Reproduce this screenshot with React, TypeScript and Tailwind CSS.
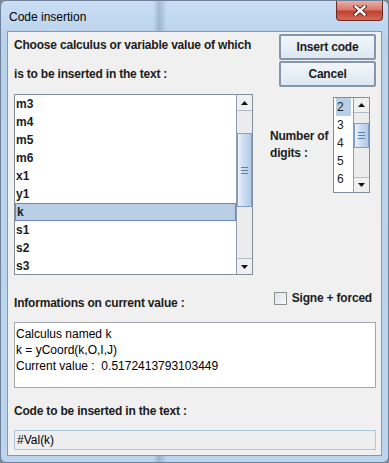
import React from 'react'

const items = ['m3', 'm4', 'm5', 'm6', 'x1', 'y1', 'k', 's1', 's2', 's3']
const digits = ['2', '3', '4', '5', '6']

function Arrow({ up }: { up?: boolean }) {
  return (
    <svg width="7" height="4" viewBox="0 0 7 4">
      <path d={up ? 'M0 4 L3.5 0 L7 4 Z' : 'M0 0 L3.5 4 L7 0 Z'} fill="#111" />
    </svg>
  )
}

// Vertical Java/Windows scroll bar; sizes are passed as full class names.
function ScrollBar({ btn, before, thumb }: { btn: string; before: string; thumb: string }) {
  return (
    <div className="flex w-[16px] shrink-0 flex-col border-l border-[#8f9cad] bg-[#ececec]">
      <div className={`${btn} flex items-center justify-center border-b border-[#b4bcc6] bg-[#f0f0f0]`}>
        <Arrow up />
      </div>
      <div className={before} />
      <div
        className={`${thumb} flex flex-col items-center justify-center gap-[2px] border border-[#7f9fc7] bg-[linear-gradient(to_right,#eaf2fb,#cadcf1_45%,#b3cae7)]`}
      >
        <div className="h-px w-[7px] bg-[#5a7fae]" />
        <div className="h-px w-[7px] bg-[#5a7fae]" />
        <div className="h-px w-[7px] bg-[#5a7fae]" />
      </div>
      <div className="flex-1" />
      <div className={`${btn} flex items-center justify-center border-t border-[#b4bcc6] bg-[#f0f0f0]`}>
        <Arrow />
      </div>
    </div>
  )
}

function Button({ label }: { label: string }) {
  return (
    <div className="flex h-[26px] w-[97px] items-center justify-center rounded-[2px] border-2 border-[#8496ab] bg-[linear-gradient(#f2f6fb,#dde7f2)] text-[12px] font-bold tracking-[-0.2px] text-[#1a1a1a]">
      {label}
    </div>
  )
}

export default function App() {
  return (
    <div className="h-[463px] w-[389px] bg-[#7d8894] font-['Liberation_Sans',Arial,sans-serif] text-[#1c1c1c]">
      {/* Aero window frame */}
      <div className="flex h-[463px] w-[389px] flex-col rounded-[6px] border border-[#6f8299] bg-[linear-gradient(to_right,transparent_152px,rgba(70,95,130,0.28)_158px,transparent_166px),linear-gradient(#c9def4,#b9d2ec_40px,#bcd4ed)]">
        <div className="flex h-[30px] shrink-0 items-start">
          <div className="pl-[8px] pt-[8px] text-[12px] leading-[16px] text-black">Code insertion</div>
          <div className="ml-auto mr-[5px] flex h-[20px] w-[47px] items-center justify-center rounded-b-[4px] border border-t-0 border-[#6b2b24] bg-[linear-gradient(#eab0a6,#d6786b_45%,#c4402f_55%,#d36a58)]">
            <svg width="14" height="11" viewBox="0 0 14 11">
              <path d="M2.5 1.5 L11.5 9.5 M11.5 1.5 L2.5 9.5" stroke="#4a1d17" strokeWidth="4.2" strokeLinecap="square" />
              <path d="M2.5 1.5 L11.5 9.5 M11.5 1.5 L2.5 9.5" stroke="#ffffff" strokeWidth="2.4" strokeLinecap="square" />
            </svg>
          </div>
        </div>

        {/* Content panel */}
        <div className="mx-[6px] flex h-[425px] flex-col border border-[#8799ad] bg-[#f0f0f0] pl-[6px] pr-[5px]">
          <div className="flex">
            <div className="flex w-[240px] flex-col">
              <div className="mt-[5px] whitespace-nowrap text-[12px] font-bold leading-[16px] tracking-[-0.2px]">
                Choose calculus or variable value of which
              </div>
              <div className="mt-[13px] whitespace-nowrap text-[12px] font-bold leading-[16px] tracking-[-0.2px]">
                is to be inserted in the text :
              </div>
              <div className="mt-[12px] flex h-[181px] border border-[#828d9b] bg-white">
                <div className="flex flex-1 flex-col overflow-hidden">
                  {items.map((it) => (
                    <div
                      key={it}
                      className={`flex h-[18px] shrink-0 items-center pl-px text-[12px] font-bold ${
                        it === 'k' ? 'border border-[#6a88bf] bg-[#b8cfe5] pl-0' : ''
                      }`}
                    >
                      {it}
                    </div>
                  ))}
                </div>
                <ScrollBar btn="h-[16px]" before="h-[22px]" thumb="h-[74px]" />
              </div>
            </div>

            <div className="flex flex-col">
              <div className="ml-[26px] mt-[2px] flex flex-col gap-px">
                <Button label="Insert code" />
                <Button label="Cancel" />
              </div>
              <div className="ml-[17px] mt-[10px] flex items-center">
                <div className="w-[63px] text-[12px] font-bold leading-[17px] tracking-[-0.2px]">
                  Number of
                  <br />
                  digits :
                </div>
                <div className="flex h-[96px] w-[37px] border border-[#828d9b] bg-white">
                  <div className="flex flex-1 flex-col px-[2px]">
                    {digits.map((d) => (
                      <div
                        key={d}
                        className={`flex h-[18px] shrink-0 items-center pl-px text-[12px] ${d === '2' ? 'bg-[#b8cfe5]' : ''}`}
                      >
                        {d}
                      </div>
                    ))}
                  </div>
                  <ScrollBar btn="h-[15px]" before="h-[10px]" thumb="h-[25px]" />
                </div>
              </div>
            </div>
          </div>

          <div className="mt-[14px] flex h-[22px]">
            <div className="self-end text-[12px] font-bold leading-[16px] tracking-[-0.2px]">
              Informations on current value :
            </div>
            <div className="ml-auto mr-[4px] mt-[3px] flex items-start gap-[5px] self-start">
              <div className="h-[13px] w-[13px] border border-[#8e8f8f] bg-[linear-gradient(135deg,#dde3ea,#f7f8f9)]" />
              <div className="-mt-[2px] text-[12px] font-bold leading-[16px] tracking-[-0.2px]">Signe + forced</div>
            </div>
          </div>

          <div className="mt-[11px] h-[66px] border border-[#a3a7ad] bg-white pl-[1px] pt-[3px] text-[12px] leading-[16px] text-black">
            <div>Calculus named k</div>
            <div>k = yCoord(k,O,I,J)</div>
            <div className="whitespace-pre">Current value :  0.5172413793103449</div>
          </div>

          <div className="mt-[15px] text-[12px] font-bold leading-[16px] tracking-[-0.2px]">
            Code to be inserted in the text :
          </div>

          <div className="mt-[11px] flex h-[20px] items-center border border-[#a9c8e6] bg-[#eeeeee] pl-[2px] text-[12px] text-black">
            #Val(k)
          </div>
        </div>
      </div>
    </div>
  )
}
